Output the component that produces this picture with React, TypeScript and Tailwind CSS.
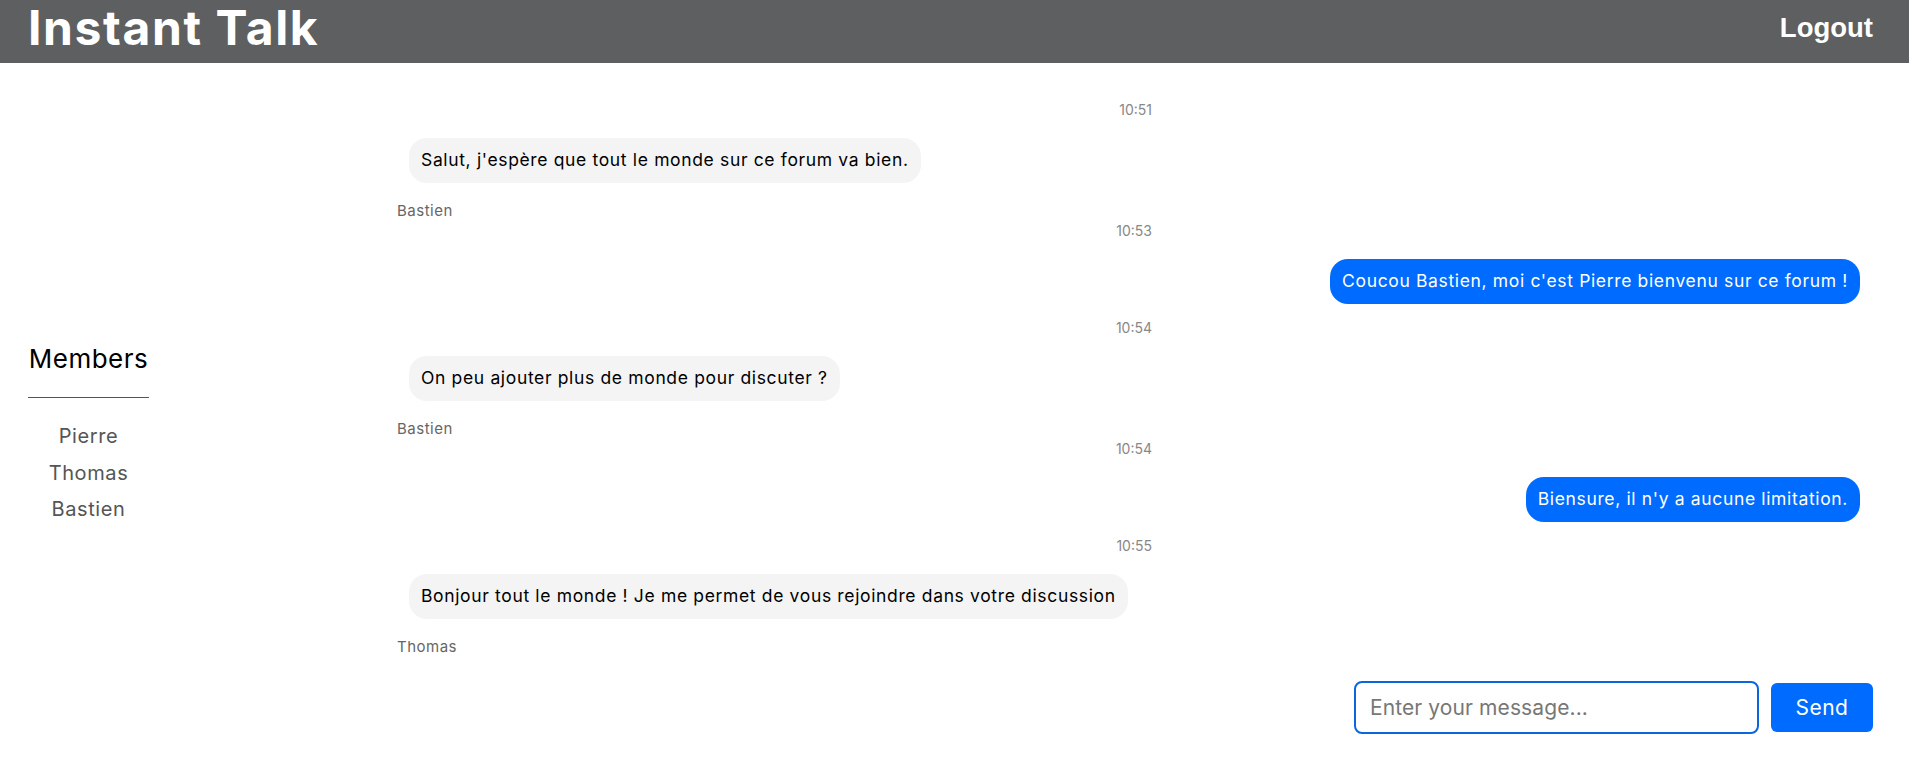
import { useState } from 'react';

interface Message {
  id: number;
  time: string;
  text: string;
  author: string;
  mine: boolean;
}

const messages: Message[] = [
  { id: 1, time: '10:51', text: "Salut, j'espère que tout le monde sur ce forum va bien.", author: 'Bastien', mine: false },
  { id: 2, time: '10:53', text: "Coucou Bastien, moi c'est Pierre bienvenu sur ce forum !", author: 'Pierre', mine: true },
  { id: 3, time: '10:54', text: 'On peu ajouter plus de monde pour discuter ?', author: 'Bastien', mine: false },
  { id: 4, time: '10:54', text: "Biensure, il n'y a aucune limitation.", author: 'Pierre', mine: true },
  { id: 5, time: '10:55', text: 'Bonjour tout le monde ! Je me permet de vous rejoindre dans votre discussion', author: 'Thomas', mine: false },
];

const members = ['Pierre', 'Thomas', 'Bastien'];

export default function App() {
  const [draft, setDraft] = useState('');

  return (
    <div className="min-h-screen bg-white font-['Inter','Open_Sans',sans-serif]">
      {/* Header */}
      <header className="flex h-[63px] items-center justify-between bg-[#5e5f61] pb-[8px] pl-[28px] pr-[36px]">
        <h1 className="text-[48px] font-bold leading-none tracking-[1.6px] text-white">Instant Talk</h1>
        <button className="font-['Liberation_Sans',Arial,sans-serif] text-[27.5px] font-bold leading-none text-white">
          Logout
        </button>
      </header>

      <div className="flex h-[721px]">
        {/* Members */}
        <aside className="ml-[28px] flex w-[121px] flex-col items-center pt-[281px]">
          <h2 className="text-[26px] leading-[30px] tracking-[0.5px] text-black">Members</h2>
          <div className="mt-[23px] h-px w-full bg-[#555]" />
          <ul className="mt-[20px] text-center text-[20px] leading-[36.5px] tracking-[0.6px] text-[#555]">
            {members.map((m) => (
              <li key={m}>{m}</li>
            ))}
          </ul>
        </aside>

        {/* Chat */}
        <main className="ml-[248px] flex flex-1 flex-col pr-[36px] pt-[37px]">
          <div className="flex flex-col pr-[13px]">
            {messages.map((msg) => (
              <div key={msg.id} className="flex flex-col">
                <div className="w-[755px] text-right text-[14px] leading-[20px] text-[#888]">{msg.time}</div>
                <div className={msg.mine ? 'mt-[18px] flex justify-end' : 'mt-[18px] flex justify-start pl-[12px]'}>
                  <div
                    className={
                      msg.mine
                        ? 'flex h-[45px] items-center rounded-[18px] bg-[#006bff] px-[12px] text-[17.5px] tracking-[0.65px] text-white'
                        : 'flex h-[45px] items-center rounded-[18px] bg-[#f4f4f4] px-[12px] text-[17.5px] tracking-[0.65px] text-black'
                    }
                  >
                    {msg.text}
                  </div>
                </div>
                <div
                  className={
                    msg.mine ? 'h-[14px]' : 'mt-[18px] h-[20px] text-[15px] leading-[20px] tracking-[0.5px] text-[#666]'
                  }
                >
                  {msg.mine ? null : msg.author}
                </div>
              </div>
            ))}
          </div>

          <div className="mt-[24px] flex items-center justify-end gap-[12px]">
            <input
              type="text"
              value={draft}
              onChange={(e) => setDraft(e.target.value)}
              placeholder="Enter your message..."
              autoFocus
              className="h-[53px] w-[405px] rounded-[8px] border-2 border-[#0a66dc] px-[14px] text-[21px] tracking-[0.1px] text-black outline-none placeholder:text-[#777]"
            />
            <button className="h-[49px] w-[102px] rounded-[6px] bg-[#006bff] text-[21px] tracking-[0.5px] text-white">
              Send
            </button>
          </div>
        </main>
      </div>
    </div>
  );
}
